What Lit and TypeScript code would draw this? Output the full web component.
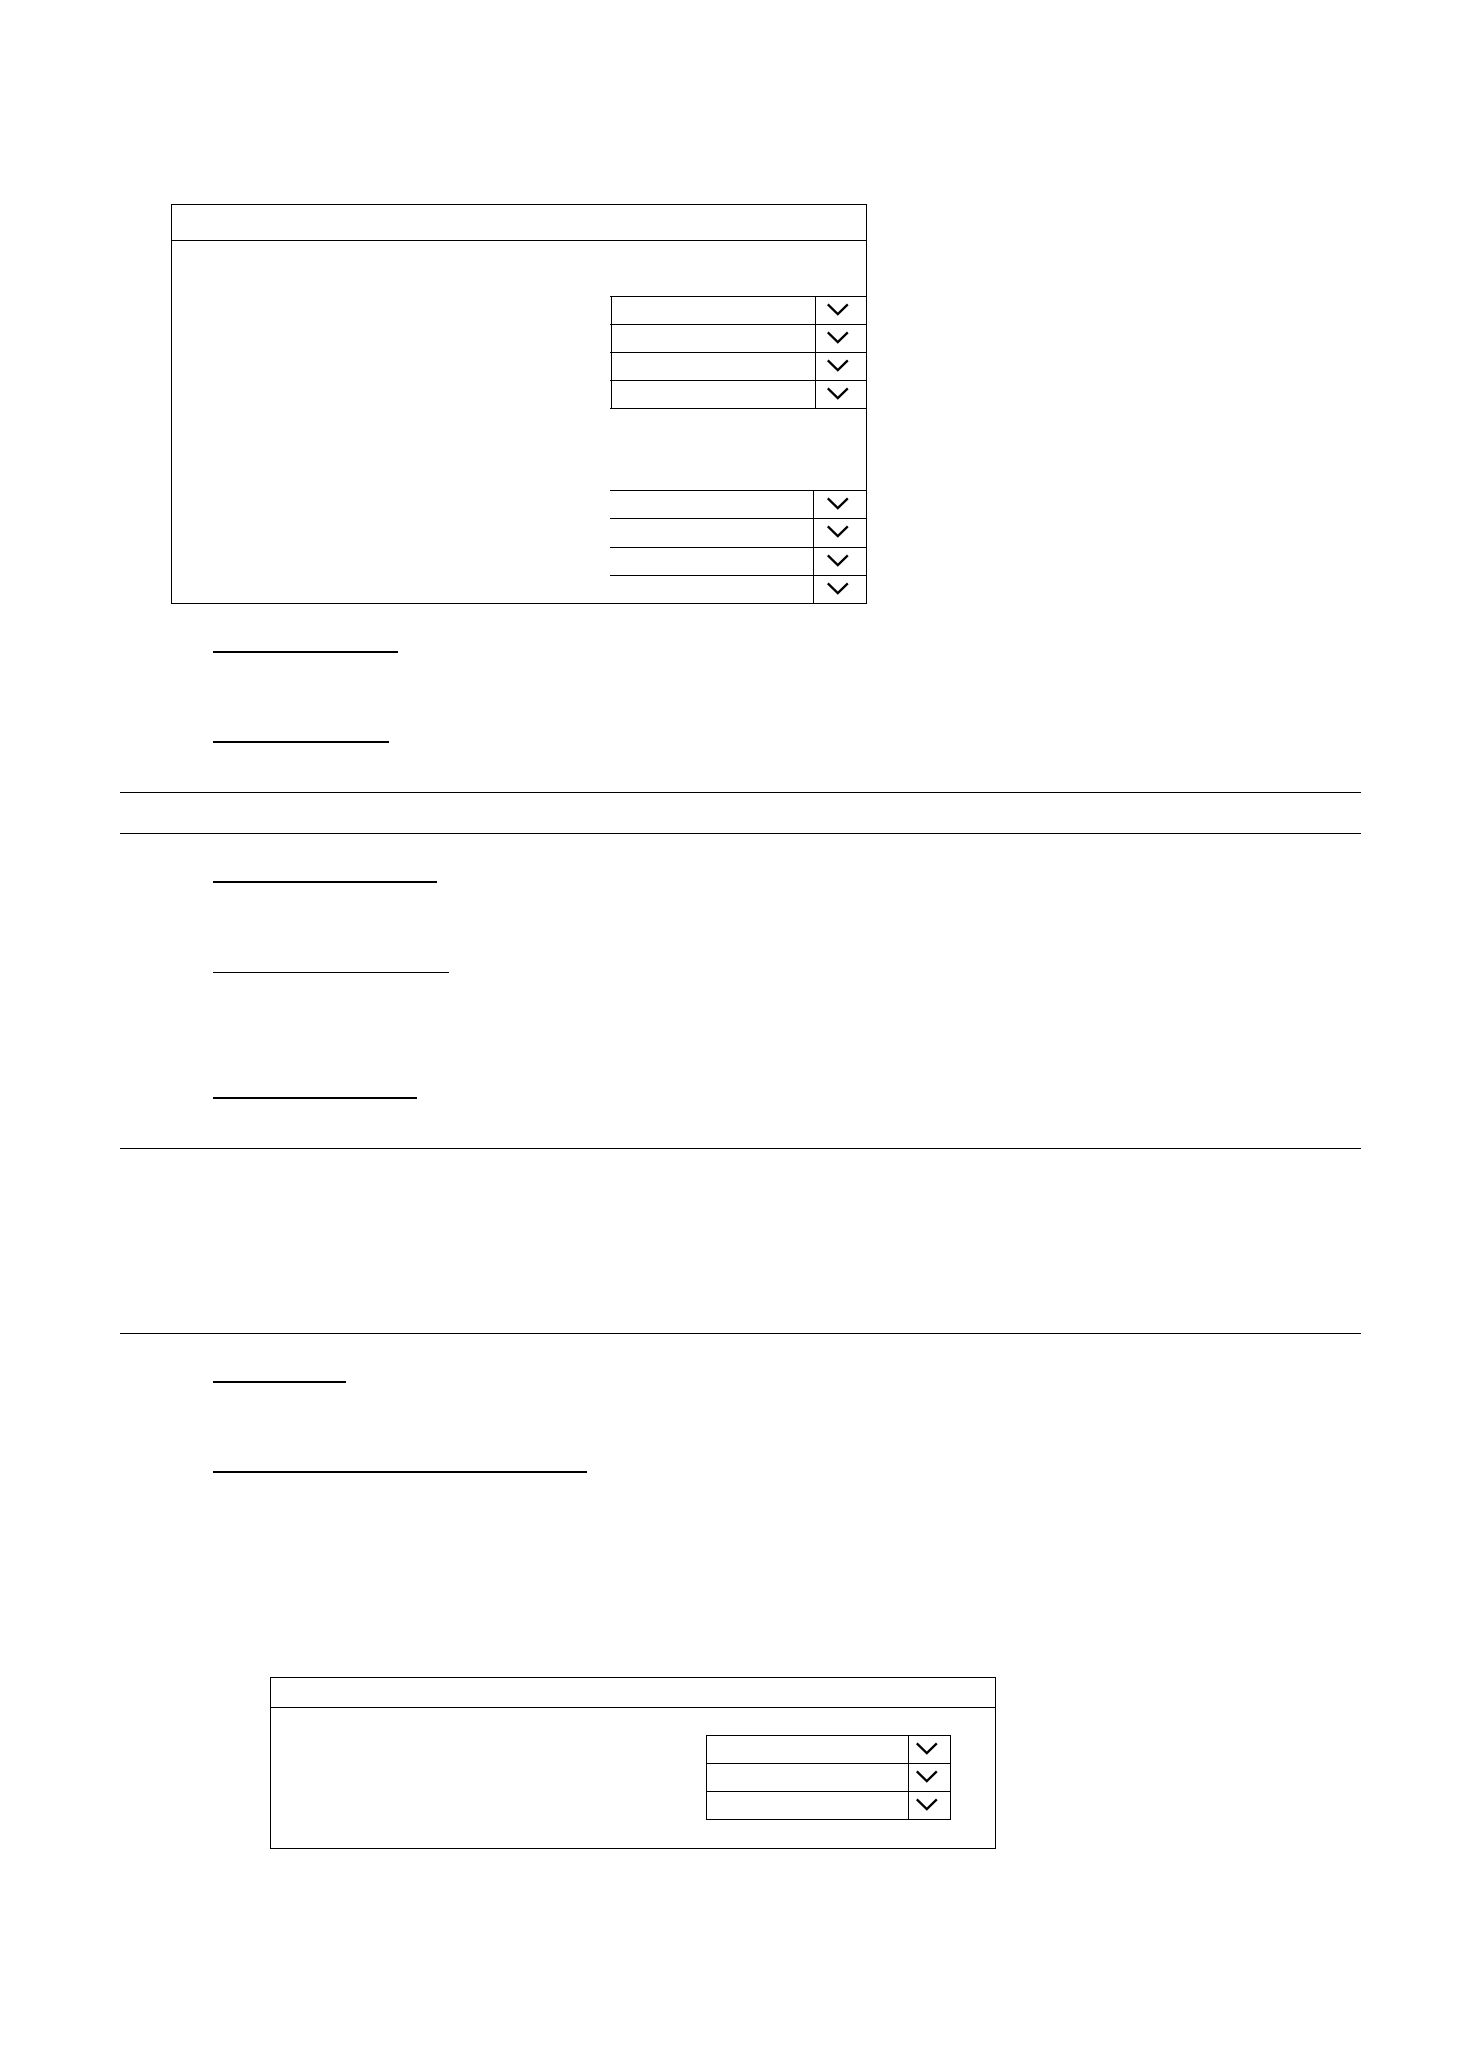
import { LitElement, html, css } from "lit";
import { customElement, property } from "lit/decorators.js";

@customElement("select-group")
class SelectGroup extends LitElement {
  @property({ type: Number }) rows = 4;
  @property() name = "Group";

  static styles = css`
    :host {
      display: grid;
      grid-auto-rows: 1fr;
      box-sizing: border-box;
    }
    .row {
      display: grid;
      grid-template-columns: minmax(0, 1fr) var(--arrow-cell, 51px);
      box-sizing: border-box;
      min-height: 28px;
      border-top: 1px solid #000;
      padding-left: var(--row-inset, 0px);
    }
    .field {
      grid-area: 1 / 1 / 2 / 3;
      appearance: none;
      box-sizing: border-box;
      width: 100%;
      height: 100%;
      margin: 0;
      padding: 0 8px;
      border: 0;
      border-left: var(--left-line, 0px) solid #000;
      border-radius: 0;
      background: transparent;
      color: #000;
      font: 14px "Liberation Sans", sans-serif;
    }
    .arrow {
      grid-area: 1 / 2;
      display: flex;
      justify-content: flex-end;
      align-items: flex-start;
      padding: 6px var(--arrow-end, 17px) 0 0;
      border-left: 1px solid #000;
      pointer-events: none;
    }
    svg {
      display: block;
      flex: none;
    }
  `;

  render() {
    return Array.from(
      { length: this.rows },
      (_, i) => html`
        <div class="row">
          <select class="field" aria-label="${this.name} ${i + 1}"></select>
          <span class="arrow">
            <svg width="22" height="13" viewBox="0 0 22 13" aria-hidden="true">
              <path d="M.8 1.4 10.8 11.1 20.8 1.4" fill="none" stroke="#000" stroke-width="2.3" />
            </svg>
          </span>
        </div>
      `
    );
  }
}

@customElement("app-root")
class AppRoot extends LitElement {
  static styles = css`
    :host {
      display: block;
      background: #fff;
    }
    .page {
      display: flex;
      flex-direction: column;
      padding: 204px 97px 215px 120px;
    }
    .panel {
      box-sizing: border-box;
      width: 100%;
      border: 1px solid #000;
    }
    .primary {
      max-width: 696px;
      margin-left: 51px;
    }
    .secondary {
      max-width: 726px;
      margin: 204px 0 0 150px;
    }
    .title {
      height: 35px;
      border-bottom: 1px solid #000;
    }
    .secondary .title {
      height: 29px;
    }
    .body {
      display: flex;
      flex-direction: column;
      align-items: flex-end;
      gap: 81px;
      padding-top: 55px;
    }
    .secondary .body {
      padding: 27px 44px 28px 0;
    }
    .boxed {
      width: 256px;
      border-bottom: 1px solid #000;
      --row-inset: 1px;
      --left-line: 1px;
    }
    .open {
      width: 256px;
      min-height: 113px;
      --arrow-cell: 53px;
    }
    .framed {
      width: 245px;
      border: 1px solid #000;
      border-top: 0;
      --arrow-cell: 42px;
      --arrow-end: 12px;
    }
    .section {
      display: flex;
      flex-direction: column;
      align-items: flex-start;
      gap: 88px;
      padding: 47px 0 49px 93px;
    }
    .last {
      padding-bottom: 0;
    }
    .underline {
      max-width: 100%;
      height: 2px;
      background: #000;
    }
    .thin {
      height: 1px;
      margin: 1px 0 36px;
    }
    .band {
      height: 40px;
      border: solid #000;
      border-width: 1px 0;
    }
    .tall {
      height: 184px;
    }
  `;

  private underline(width: number, thin = false) {
    return html`<div class="underline ${thin ? "thin" : ""}" style="width:${width}px"></div>`;
  }

  render() {
    return html`
      <main class="page">
        <section class="panel primary">
          <div class="title"></div>
          <div class="body">
            <select-group class="boxed" name="Upper list" .rows=${4}></select-group>
            <select-group class="open" name="Lower list" .rows=${4}></select-group>
          </div>
        </section>
        <section class="section">${this.underline(185)}${this.underline(176)}</section>
        <div class="band"></div>
        <section class="section">
          ${this.underline(224)}${this.underline(236, true)}${this.underline(204)}
        </section>
        <div class="band tall"></div>
        <section class="section last">${this.underline(133)}${this.underline(374)}</section>
        <section class="panel secondary">
          <div class="title"></div>
          <div class="body">
            <select-group class="framed" name="Second panel list" .rows=${3}></select-group>
          </div>
        </section>
      </main>
    `;
  }
}
